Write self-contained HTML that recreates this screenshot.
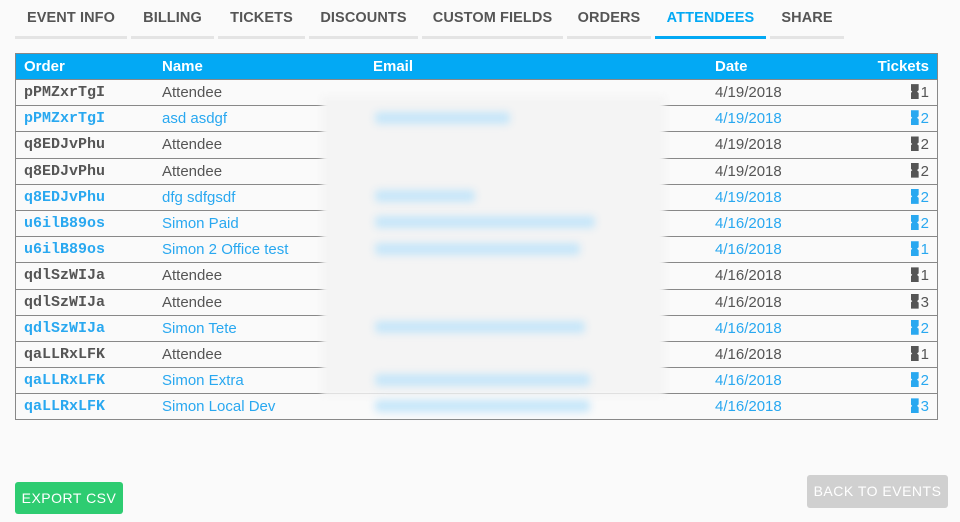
<!DOCTYPE html><html><head><style>
body{margin:0;width:960px;height:522px;background:#fafafa;font-family:"Liberation Sans",Arial,sans-serif;position:relative;overflow:hidden}
.tab{position:absolute;top:0;height:36px;border-bottom:3px solid #e4e4e4;font-size:14.5px;font-weight:bold;color:#555;text-align:center;line-height:36px;letter-spacing:.1px}
.tab.a{color:#03a9f4;border-color:#03a9f4}
table{position:absolute;left:15px;top:53px;width:923px;border-collapse:collapse;border:1px solid #888;font-size:15px}
th{background:#03a9f4;color:#fff;text-align:left;height:25px;padding:0 8px;font-size:15px;border-bottom:1px solid #888}
td{height:25.2px;padding:0 8px;border-bottom:1px solid #888;color:#555}
tr.b td{color:#29a8f0}
td.o{font-family:"Liberation Mono",monospace;font-weight:bold;font-size:15px}
td.t,th.t{text-align:right}
.ic{display:inline-block;width:8px;height:15px;background:currentColor;vertical-align:-2px;margin-right:2px;clip-path:polygon(0 0,100% 0,100% 40%,80% 50%,100% 60%,100% 100%,0 100%,0 60%,20% 50%,0 40%)}
.blur{position:absolute;left:322px;top:96px;width:343px;height:300px;background:#f4f4f4;filter:blur(3px)}
.bl{position:absolute;height:12px;background:#c6e6f9;filter:blur(4px);border-radius:4px}
.btn{position:absolute;font-size:14px;letter-spacing:.5px;border-radius:3px;text-align:center}
</style></head><body>
<div class="tab" style="left:15px;width:112px">EVENT INFO</div>
<div class="tab" style="left:131px;width:83px">BILLING</div>
<div class="tab" style="left:218px;width:87px">TICKETS</div>
<div class="tab" style="left:309px;width:109px">DISCOUNTS</div>
<div class="tab" style="left:422px;width:141px">CUSTOM FIELDS</div>
<div class="tab" style="left:567px;width:84px">ORDERS</div>
<div class="tab a" style="left:655px;width:111px">ATTENDEES</div>
<div class="tab" style="left:770px;width:74px">SHARE</div>
<table>
<tr><th style="width:122px">Order</th><th style="width:195px">Name</th><th>Email</th><th style="width:138px">Date</th><th class="t" style="width:60px">Tickets</th></tr>
<tr><td class="o">pPMZxrTgI</td><td>Attendee</td><td></td><td>4/19/2018</td><td class="t"><span class="ic"></span>1</td></tr>
<tr class="b"><td class="o">pPMZxrTgI</td><td>asd asdgf</td><td></td><td>4/19/2018</td><td class="t"><span class="ic"></span>2</td></tr>
<tr><td class="o">q8EDJvPhu</td><td>Attendee</td><td></td><td>4/19/2018</td><td class="t"><span class="ic"></span>2</td></tr>
<tr><td class="o">q8EDJvPhu</td><td>Attendee</td><td></td><td>4/19/2018</td><td class="t"><span class="ic"></span>2</td></tr>
<tr class="b"><td class="o">q8EDJvPhu</td><td>dfg sdfgsdf</td><td></td><td>4/19/2018</td><td class="t"><span class="ic"></span>2</td></tr>
<tr class="b"><td class="o">u6ilB89os</td><td>Simon Paid</td><td></td><td>4/16/2018</td><td class="t"><span class="ic"></span>2</td></tr>
<tr class="b"><td class="o">u6ilB89os</td><td>Simon 2 Office test</td><td></td><td>4/16/2018</td><td class="t"><span class="ic"></span>1</td></tr>
<tr><td class="o">qdlSzWIJa</td><td>Attendee</td><td></td><td>4/16/2018</td><td class="t"><span class="ic"></span>1</td></tr>
<tr><td class="o">qdlSzWIJa</td><td>Attendee</td><td></td><td>4/16/2018</td><td class="t"><span class="ic"></span>3</td></tr>
<tr class="b"><td class="o">qdlSzWIJa</td><td>Simon Tete</td><td></td><td>4/16/2018</td><td class="t"><span class="ic"></span>2</td></tr>
<tr><td class="o">qaLLRxLFK</td><td>Attendee</td><td></td><td>4/16/2018</td><td class="t"><span class="ic"></span>1</td></tr>
<tr class="b"><td class="o">qaLLRxLFK</td><td>Simon Extra</td><td></td><td>4/16/2018</td><td class="t"><span class="ic"></span>2</td></tr>
<tr class="b"><td class="o">qaLLRxLFK</td><td>Simon Local Dev</td><td></td><td>4/16/2018</td><td class="t"><span class="ic"></span>3</td></tr>
</table>
<div class="blur"></div>
<div class="bl" style="left:375px;top:112px;width:135px"></div>
<div class="bl" style="left:375px;top:190px;width:100px"></div>
<div class="bl" style="left:375px;top:216px;width:220px"></div>
<div class="bl" style="left:375px;top:243px;width:205px"></div>
<div class="bl" style="left:375px;top:321px;width:210px"></div>
<div class="bl" style="left:375px;top:374px;width:215px"></div>
<div class="bl" style="left:375px;top:400px;width:215px"></div>
<div class="btn" style="left:15px;top:482px;width:108px;height:32px;line-height:32px;background:#2ecc71;color:#fff">EXPORT CSV</div>
<div class="btn" style="left:807px;top:475px;width:141px;height:33px;line-height:33px;background:#d0d0d0;color:#fff">BACK TO EVENTS</div>
</body></html>
